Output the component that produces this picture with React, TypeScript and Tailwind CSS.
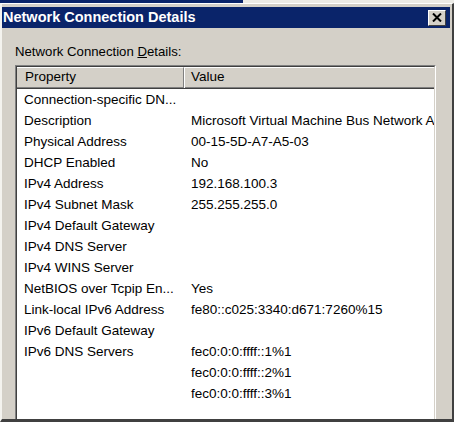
import React from "react";

const rows: [string, string][] = [
  ["Connection-specific DN...", ""],
  ["Description", "Microsoft Virtual Machine Bus Network Adapter"],
  ["Physical Address", "00-15-5D-A7-A5-03"],
  ["DHCP Enabled", "No"],
  ["IPv4 Address", "192.168.100.3"],
  ["IPv4 Subnet Mask", "255.255.255.0"],
  ["IPv4 Default Gateway", ""],
  ["IPv4 DNS Server", ""],
  ["IPv4 WINS Server", ""],
  ["NetBIOS over Tcpip En...", "Yes"],
  ["Link-local IPv6 Address", "fe80::c025:3340:d671:7260%15"],
  ["IPv6 Default Gateway", ""],
  ["IPv6 DNS Servers", "fec0:0:0:ffff::1%1"],
  ["", "fec0:0:0:ffff::2%1"],
  ["", "fec0:0:0:ffff::3%1"],
];

export default function App() {
  return (
    <div
      className="w-[454px] h-[422px] overflow-hidden bg-[#d4d0c8] flex flex-col text-black"
      style={{ fontFamily: '"Liberation Sans", Arial, sans-serif' }}
    >
      <div className="h-[3px] flex shrink-0">
        <div className="w-[243px] bg-[#0a246a]" />
        <div className="flex-1 bg-[#ecebe6]" />
      </div>
      <div className="flex-1 flex flex-col border-t border-l-2 border-t-[#ffffff] border-l-[#f4f3ef] border-r-2 border-b-[3px] border-r-[#404040] border-b-[#404040] pt-[3px] min-h-0">
        <div className="h-[21px] shrink-0 bg-[#0a246a] mr-[2px] flex items-center justify-between pl-[1px] pr-[4px]">
          <span className="text-white font-bold text-[14.5px] leading-none">Network Connection Details</span>
          <div className="w-[18px] h-[16px] bg-[#d4d0c8] border-t border-l border-t-white border-l-white border-r border-b border-r-[#404040] border-b-[#404040] flex items-center justify-center">
            <svg width="10" height="9" viewBox="0 0 10 9">
              <path d="M1 0.5 L9 8.5 M9 0.5 L1 8.5" stroke="#000" strokeWidth="2" />
            </svg>
          </div>
        </div>
        <div className="pl-[13px] pt-[15px] h-[37px] shrink-0 text-[13.2px] leading-[17px]">
          Network Connection <span className="underline">D</span>etails:
        </div>
        <div className="ml-[13px] w-[421px] flex-1 min-h-0 bg-white border-t border-l border-t-[#808080] border-l-[#808080] border-r border-r-[#ffffff] flex flex-col overflow-hidden">
          <div className="flex-1 border-t border-l border-t-[#404040] border-l-[#404040] border-r border-r-[#d4d0c8] flex flex-col overflow-hidden">
            <div className="h-[22px] shrink-0 flex bg-[#d4d0c8] border-b border-b-[#404040] text-[13.5px]">
              <div className="w-[167px] h-full border-t border-t-white border-r border-r-[#808080] border-b border-b-[#808080] flex items-center pl-[8px]">
                Property
              </div>
              <div className="w-[1px] bg-white h-full" />
              <div className="flex-1 h-full border-t border-t-white border-b border-b-[#808080] flex items-center pl-[6px]">
                Value
              </div>
            </div>
            <div className="flex flex-col pt-[1px]">
              {rows.map(([k, v], i) => (
                <div key={i} className="h-[21px] flex items-center text-[13.5px] whitespace-nowrap">
                  <div className="w-[167px] pl-[7px] overflow-hidden">{k}</div>
                  <div className="flex-1 pl-[7px] overflow-hidden">{v}</div>
                </div>
              ))}
            </div>
          </div>
        </div>
      </div>
    </div>
  );
}
